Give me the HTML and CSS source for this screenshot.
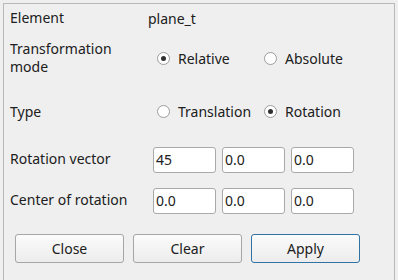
FILE: index.html
```html
<!DOCTYPE html>
<html lang="en">
<head>
  <meta charset="UTF-8" />
  <title>Transform element</title>
  <link rel="stylesheet" href="styles.css">
</head>
<body>
  <div class="panel">
    <div class="row row-element">
      <div class="label">Element</div>
      <div class="value">plane_t</div>
    </div>

    <div class="row row-mode">
      <div class="label">Transformation<br>mode</div>
      <div class="radios">
        <label class="radio"><span class="dot checked"></span>Relative</label>
        <label class="radio"><span class="dot"></span>Absolute</label>
      </div>
    </div>

    <div class="row row-type">
      <div class="label">Type</div>
      <div class="radios">
        <label class="radio"><span class="dot"></span>Translation</label>
        <label class="radio"><span class="dot checked"></span>Rotation</label>
      </div>
    </div>

    <div class="row row-field">
      <div class="label label-field">Rotation vector</div>
      <div class="inputs">
        <div class="input">45</div>
        <div class="input">0.0</div>
        <div class="input">0.0</div>
      </div>
    </div>

    <div class="row row-field">
      <div class="label label-field">Center of rotation</div>
      <div class="inputs">
        <div class="input">0.0</div>
        <div class="input">0.0</div>
        <div class="input">0.0</div>
      </div>
    </div>

    <div class="buttons">
      <button class="btn">Close</button>
      <button class="btn">Clear</button>
      <button class="btn btn-default">Apply</button>
    </div>
  </div>
</body>
</html>
```

FILE: styles.css
```css
html, body {
  margin: 0;
  height: 100%;
  overflow: hidden;
}

body {
  background-color: #efefef;
  font-family: 'Noto Sans', sans-serif;
  font-size: 14px;
  color: #202020;
  padding: 3px;
  box-sizing: border-box;
}

.panel {
  border: 1px solid #b9b9b9;
  height: 320px;
  padding: 0 6px;
}

.row {
  display: flex;
  align-items: center;
}

.label {
  width: 143px;
  line-height: 18px;
}

.row-element {
  height: 28px;
}

.row-element .value {
  margin-left: -5px;
}

.row-mode {
  height: 52px;
}

.row-type {
  height: 55px;
}

.row-field {
  height: 41px;
}

.label-field {
  padding-bottom: 1px;
}

.radios {
  display: flex;
  padding-left: 4px;
}

.radio {
  width: 107px;
  display: flex;
  align-items: center;
}

.dot {
  width: 11px;
  height: 11px;
  border: 1px solid #9c9c9c;
  border-radius: 50%;
  background-color: white;
  margin-right: 8px;
  position: relative;
}

.dot.checked::after {
  content: "";
  position: absolute;
  left: 3px;
  top: 3px;
  width: 5px;
  height: 5px;
  border-radius: 50%;
  background-color: #303030;
}

.inputs {
  display: flex;
  gap: 6px;
}

.input {
  width: 63px;
  height: 26px;
  box-sizing: border-box;
  border: 1px solid #a9a9a9;
  border-radius: 3px;
  background-color: white;
  padding-left: 2px;
  line-height: 24px;
}

.buttons {
  display: flex;
  gap: 9px;
  margin-top: 13px;
  padding-left: 5px;
}

.btn {
  width: 109px;
  height: 29px;
  font-family: inherit;
  font-size: 14px;
  color: #202020;
  border: 1px solid #a6a6a6;
  border-radius: 3px;
  background: linear-gradient(#fbfbfb, #ececec);
}

.btn-default {
  border-color: #2f72a3;
}
```
